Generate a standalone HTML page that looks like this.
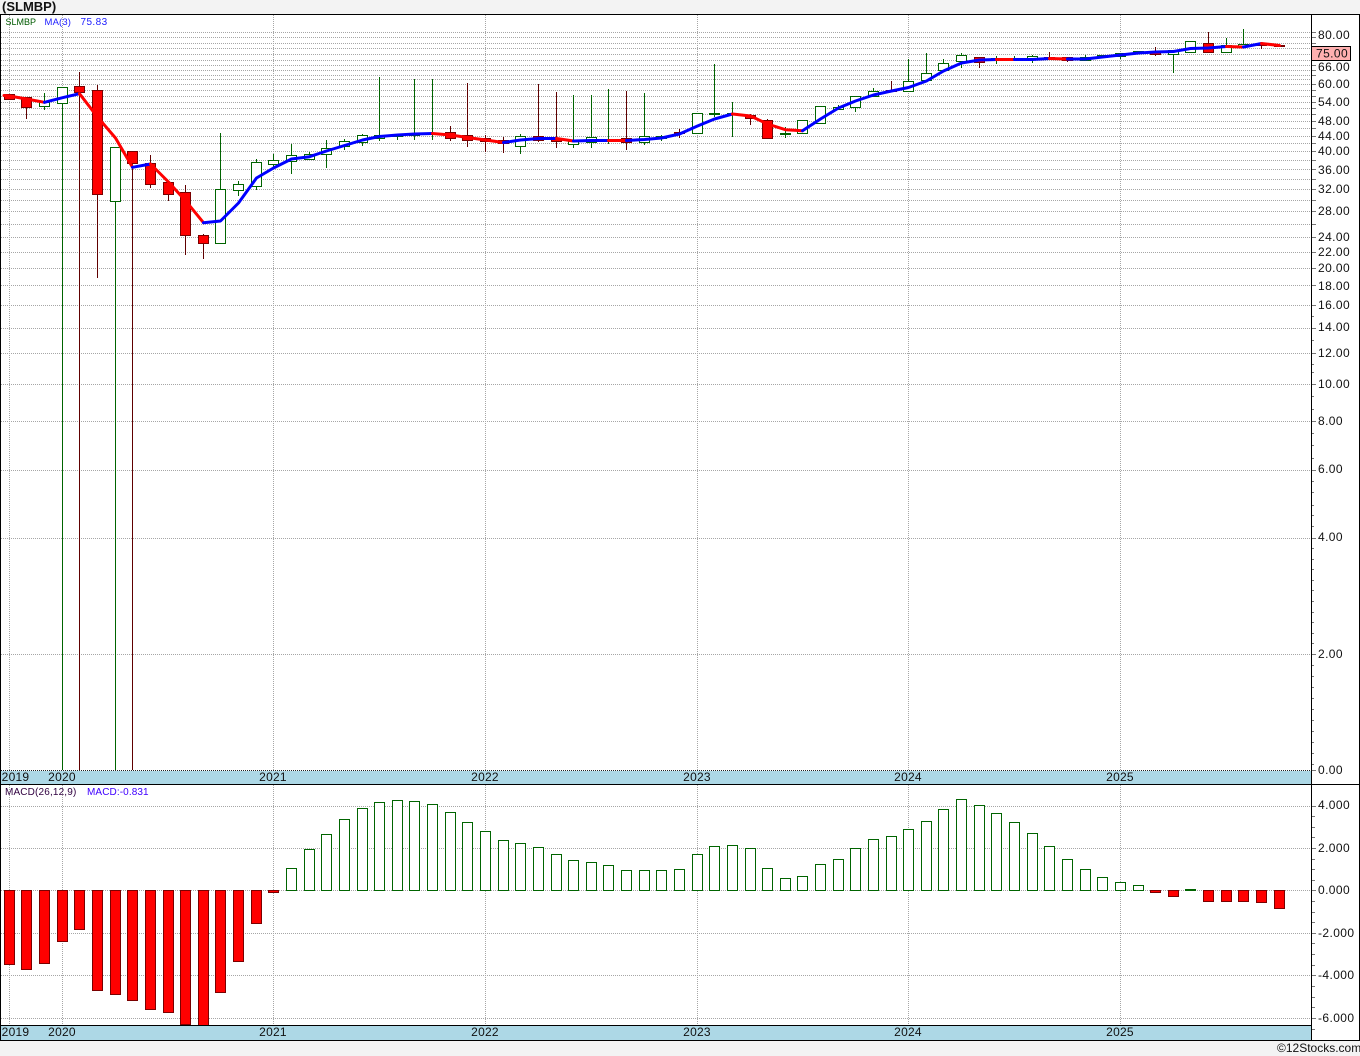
<!DOCTYPE html>
<html><head><meta charset="utf-8"><title>SLMBP</title>
<style>
html,body{margin:0;padding:0;background:#f3f3f3;width:1360px;height:1056px;overflow:hidden}
svg{display:block;font-family:"Liberation Sans",sans-serif}
.c{shape-rendering:crispEdges}
.ax{font-size:12px;letter-spacing:.4px;fill:#111}
.yr{font-size:12px;letter-spacing:.25px;fill:#111;text-anchor:middle}
.s{font-size:10px}
</style></head><body>
<svg width="1360" height="1056" viewBox="0 0 1360 1056" xmlns="http://www.w3.org/2000/svg">
<rect width="1360" height="1056" fill="#f3f3f3"/>
<text x="2" y="11" font-size="13" font-weight="bold" fill="#111">(SLMBP)</text>
<rect x="0" y="14" width="1360" height="1027" fill="#fff"/>

<g class="c">
<!-- grid horizontal main -->
<path fill="none" stroke="#a6a6a6" stroke-dasharray="1 1" d="M1 32.5H1311M1 37.5H1311M1 43.5H1311M1 48.5H1311M1 54.5H1311M1 60.5H1311M1 65.5H1311M1 70.5H1311M1 75.5H1311M1 79.5H1311M1 84.5H1311M1 90.5H1311M1 96.5H1311M1 102.5H1311M1 108.5H1311M1 114.5H1311M1 121.5H1311M1 128.5H1311M1 136.5H1311M1 143.5H1311M1 151.5H1311M1 160.5H1311M1 169.5H1311M1 179.5H1311M1 189.5H1311M1 200.5H1311M1 211.5H1311M1 224.5H1311M1 237.5H1311M1 252.5H1311M1 268.5H1311M1 285.5H1311M1 305.5H1311M1 328.5H1311M1 353.5H1311M1 384.5H1311M1 421.5H1311M1 470.5H1311M1 538.5H1311M1 654.5H1311"/>
<!-- grid vertical main -->
<path fill="none" stroke="#a6a6a6" stroke-dasharray="1 1" d="M9.5 15V770M62.5 15V770M273.5 15V770M485.5 15V770M697.5 15V770M908.5 15V770M1120.5 15V770"/>
<!-- macd grid -->
<path fill="none" stroke="#a6a6a6" stroke-dasharray="1 1" d="M1 806.5H1311M1 848.5H1311M1 890.5H1311M1 933.5H1311M1 975.5H1311M1 1018.5H1311M9.5 785V1025M62.5 785V1025M273.5 785V1025M485.5 785V1025M697.5 785V1025M908.5 785V1025M1120.5 785V1025"/>

<!-- wicks -->
<path fill="none" stroke="#006400" d="M44.5 93V110M62.5 87V770M115.5 147V770M220.5 133V243M238.5 181V196M256.5 159V190M273.5 154V168M291.5 144V174M309.5 152V159M326.5 140V168M344.5 139V150M362.5 134V146M379.5 77V141M397.5 134V140M414.5 79V140M432.5 79V140M520.5 134V154M573.5 95V148M591.5 95V148M608.5 89V144M644.5 93V145M661.5 135V141M714.5 64V117M732.5 102V137M785.5 127V138M838.5 105V109M855.5 96V112M873.5 88V97M908.5 59V92M926.5 53V81M943.5 59V71M961.5 53V68M996.5 56V64M1014.5 56V61M1032.5 55V63M1085.5 55V61M1120.5 53V59M1173.5 50V73M1226.5 38V52M1243.5 29V46"/>
<path fill="none" stroke="#600000" d="M26.5 97V119M79.5 72V770M97.5 85V278M132.5 152V770M150.5 155V188M168.5 181V201M185.5 185V255M203.5 234V259M450.5 126V141M467.5 83V147M485.5 135V152M503.5 137V153M538.5 84V142M556.5 92V148M626.5 91V150M679.5 129V138M750.5 114V125M767.5 119V121M891.5 81V92M979.5 57V68M1049.5 52V60M1067.5 57V62M1155.5 47V56M1208.5 32V53M1261.5 43V49"/>

<!-- bodies -->
<path fill="#fff" stroke="#006400" d="M39.5 102.5h10v4h-10zM57.5 87.5h10v16h-10zM110.5 147.5h10v54h-10zM215.5 189.5h10v54h-10zM233.5 184.5h10v6h-10zM251.5 162.5h10v24h-10zM268.5 160.5h10v4h-10zM286.5 155.5h10v6h-10zM304.5 154.5h10v5h-10zM321.5 148.5h10v6h-10zM339.5 141.5h10v5h-10zM357.5 135.5h10v7h-10zM374.5 135.5h10v3h-10zM392.5 134.5h10v2h-10zM409.5 134.5h10v1h-10zM427.5 133.5h10v1h-10zM515.5 136.5h10v10h-10zM568.5 141.5h10v3h-10zM586.5 137.5h10v5h-10zM603.5 139.5h10v2h-10zM639.5 136.5h10v6h-10zM656.5 136.5h10v2h-10zM692.5 113.5h10v20h-10zM709.5 113.5h10v1h-10zM727.5 113.5h10v1h-10zM780.5 133.5h10v1h-10zM797.5 120.5h10v13h-10zM815.5 106.5h10v17h-10zM833.5 107.5h10v2h-10zM850.5 96.5h10v11h-10zM868.5 91.5h10v5h-10zM903.5 81.5h10v10h-10zM921.5 73.5h10v7h-10zM938.5 63.5h10v7h-10zM956.5 55.5h10v6h-10zM991.5 58.5h10v2h-10zM1009.5 58.5h10v2h-10zM1027.5 56.5h10v3h-10zM1080.5 57.5h10v3h-10zM1097.5 55.5h10v2h-10zM1115.5 53.5h10v3h-10zM1133.5 51.5h10v2h-10zM1168.5 50.5h10v4h-10zM1185.5 41.5h10v11h-10zM1221.5 45.5h10v7h-10zM1238.5 44.5h10v2h-10z"/>
<path fill="#f00" stroke="#7a0000" d="M4.5 94.5h10v5h-10zM21.5 97.5h10v10h-10zM74.5 86.5h10v6h-10zM92.5 90.5h10v104h-10zM127.5 151.5h10v12h-10zM145.5 163.5h10v21h-10zM163.5 182.5h10v12h-10zM180.5 192.5h10v43h-10zM198.5 235.5h10v8h-10zM445.5 132.5h10v6h-10zM462.5 135.5h10v5h-10zM480.5 138.5h10v3h-10zM498.5 140.5h10v3h-10zM533.5 136.5h10v4h-10zM551.5 138.5h10v3h-10zM621.5 138.5h10v4h-10zM674.5 132.5h10v1h-10zM745.5 115.5h10v3h-10zM762.5 120.5h10v18h-10zM886.5 90.5h10v1h-10zM974.5 57.5h10v5h-10zM1044.5 57.5h10v2h-10zM1062.5 57.5h10v3h-10zM1150.5 51.5h10v3h-10zM1203.5 43.5h10v9h-10zM1256.5 43.5h10v2h-10zM1274.5 45.5h10v1h-10z"/>

<!-- MACD bars -->
<path fill="#fff" stroke="#006400" d="M286.5 868.5h10v22h-10zM304.5 849.5h10v41h-10zM321.5 834.5h10v56h-10zM339.5 819.5h10v71h-10zM357.5 808.5h10v82h-10zM374.5 802.5h10v88h-10zM392.5 800.5h10v90h-10zM409.5 801.5h10v89h-10zM427.5 804.5h10v86h-10zM445.5 812.5h10v78h-10zM462.5 822.5h10v68h-10zM480.5 831.5h10v59h-10zM498.5 840.5h10v50h-10zM515.5 843.5h10v47h-10zM533.5 847.5h10v43h-10zM551.5 854.5h10v36h-10zM568.5 860.5h10v30h-10zM586.5 862.5h10v28h-10zM603.5 865.5h10v25h-10zM621.5 870.5h10v20h-10zM639.5 870.5h10v20h-10zM656.5 870.5h10v20h-10zM674.5 869.5h10v21h-10zM692.5 854.5h10v36h-10zM709.5 846.5h10v44h-10zM727.5 845.5h10v45h-10zM745.5 848.5h10v42h-10zM762.5 868.5h10v22h-10zM780.5 878.5h10v12h-10zM797.5 876.5h10v14h-10zM815.5 864.5h10v26h-10zM833.5 859.5h10v31h-10zM850.5 848.5h10v42h-10zM868.5 839.5h10v51h-10zM886.5 836.5h10v54h-10zM903.5 829.5h10v61h-10zM921.5 821.5h10v69h-10zM938.5 809.5h10v81h-10zM956.5 799.5h10v91h-10zM974.5 805.5h10v85h-10zM991.5 813.5h10v77h-10zM1009.5 822.5h10v68h-10zM1027.5 833.5h10v57h-10zM1044.5 846.5h10v44h-10zM1062.5 859.5h10v31h-10zM1080.5 869.5h10v21h-10zM1097.5 877.5h10v13h-10zM1115.5 882.5h10v8h-10zM1133.5 885.5h10v5h-10zM1185.5 889.5h10v1h-10z"/>
<path fill="#f00" stroke="#7a0000" d="M4.5 890.5h10v74h-10zM21.5 890.5h10v79h-10zM39.5 890.5h10v73h-10zM57.5 890.5h10v51h-10zM74.5 890.5h10v39h-10zM92.5 890.5h10v100h-10zM110.5 890.5h10v104h-10zM127.5 890.5h10v110h-10zM145.5 890.5h10v119h-10zM163.5 890.5h10v122h-10zM180.5 890.5h10v134h-10zM198.5 890.5h10v135h-10zM215.5 890.5h10v102h-10zM233.5 890.5h10v71h-10zM251.5 890.5h10v33h-10zM268.5 890.5h10v2h-10zM1150.5 890.5h10v2h-10zM1168.5 890.5h10v6h-10zM1203.5 890.5h10v11h-10zM1221.5 890.5h10v11h-10zM1238.5 890.5h10v11h-10zM1256.5 890.5h10v12h-10zM1274.5 890.5h10v18h-10z"/>
</g>

<!-- moving average -->
<g fill="none" stroke-width="3" stroke-linejoin="round" stroke-linecap="round">
<polyline stroke="#f00" points="4,95.5 9.5,96 26.5,99 44.5,102.3"/>
<polyline stroke="#00f" points="44.5,102.3 62.5,97.7 79.5,93.7"/>
<polyline stroke="#f00" points="79.5,93.7 97.5,117 115.5,138 132.5,167.3"/>
<polyline stroke="#00f" points="132.5,167.3 150.5,164"/>
<polyline stroke="#f00" points="150.5,164 168.5,182 185.5,200.7 203.5,222.7"/>
<polyline stroke="#00f" points="203.5,222.7 220.5,221 238.5,203 256.5,178 273.5,168 291.5,159 309.5,156.7 326.5,151 344.5,145.5 362.5,140 379.5,136.5 397.5,135 414.5,134 432.5,133.5"/>
<polyline stroke="#f00" points="432.5,133.5 450.5,135 467.5,137.5 485.5,140 503.5,142.5"/>
<polyline stroke="#00f" points="503.5,142.5 520.5,140 538.5,138.5 556.5,138.5"/>
<polyline stroke="#f00" points="556.5,138.5 573.5,141"/>
<polyline stroke="#00f" points="573.5,141 591.5,140.5 608.5,140.5"/>
<polyline stroke="#f00" points="608.5,140.5 626.5,140.5"/>
<polyline stroke="#00f" points="626.5,140.5 644.5,139.5 661.5,138 679.5,134 697.5,126 714.5,119 732.5,114"/>
<polyline stroke="#f00" points="732.5,114 750.5,116 767.5,124 785.5,129.7 802.5,130.7"/>
<polyline stroke="#00f" points="802.5,130.7 820.5,119 838.5,108 855.5,101 873.5,95 891.5,91 908.5,87.5 926.5,81 943.5,71 961.5,63 979.5,60 996.5,59.5"/>
<polyline stroke="#f00" points="996.5,59.5 1014.5,59.5"/>
<polyline stroke="#00f" points="1014.5,59.5 1032.5,59.5 1049.5,58.5"/>
<polyline stroke="#f00" points="1049.5,58.5 1067.5,59"/>
<polyline stroke="#00f" points="1067.5,59 1085.5,59 1102.5,57 1120.5,55 1138.5,53 1155.5,52 1173.5,51.5 1190.5,48.5 1208.5,48 1226.5,46.5"/>
<polyline stroke="#f00" points="1226.5,46.5 1243.5,47"/>
<polyline stroke="#00f" points="1243.5,47 1261.5,43.5"/>
<polyline stroke="#f00" points="1261.5,43.5 1279.5,45.5"/>
</g>

<g class="c">
<!-- bands -->
<rect x="1" y="771" width="1310" height="13" fill="#add8e6"/>
<rect x="1" y="1026" width="1310" height="14" fill="#add8e6"/>
<path stroke="#222" fill="none" stroke-dasharray="1 1" d="M1 770.5H1311"/>
<!-- ticks -->
<path fill="none" stroke="#777" d="M1311 32.5h5M1311 37.5h5M1311 43.5h5M1311 65.5h5M1311 70.5h5M1311 75.5h5M1311 84.5h5M1311 90.5h5M1311 96.5h5M1311 102.5h5M1311 108.5h5M1311 114.5h5M1311 121.5h5M1311 128.5h5M1311 136.5h5M1311 143.5h5M1311 151.5h5M1311 160.5h5M1311 169.5h5M1311 179.5h5M1311 189.5h5M1311 200.5h5M1311 211.5h5M1311 224.5h5M1311 237.5h5M1311 252.5h5M1311 268.5h5M1311 285.5h5M1311 305.5h5M1311 316.5h3M1311 328.5h5M1311 340.5h3M1311 353.5h5M1311 364.5h3M1311 372.5h3M1311 384.5h5M1311 396.5h3M1311 409.5h3M1311 421.5h5M1311 433.5h3M1311 445.5h3M1311 458.5h3M1311 470.5h5M1311 481.5h3M1311 492.5h3M1311 505.5h3M1311 515.5h3M1311 526.5h3M1311 538.5h5M1311 548.5h3M1311 559.5h3M1311 569.5h3M1311 580.5h3M1311 590.5h3M1311 601.5h3M1311 612.5h3M1311 622.5h3M1311 633.5h3M1311 643.5h3M1311 654.5h5M1311 665.5h3M1311 676.5h3M1311 687.5h3M1311 698.5h3M1311 709.5h3M1311 720.5h3M1311 731.5h3M1311 742.5h3M1311 753.5h3M1311 764.5h3M1311 770.5h5"/>
<path fill="none" stroke="#777" d="M1311 806.5h5M1311 816.5h4M1311 827.5h4M1311 837.5h4M1311 848.5h5M1311 859.5h4M1311 869.5h4M1311 880.5h4M1311 890.5h5M1311 901.5h4M1311 912.5h4M1311 922.5h4M1311 933.5h5M1311 943.5h4M1311 954.5h4M1311 965.5h4M1311 975.5h5M1311 986.5h4M1311 997.5h4M1311 1007.5h4M1311 1018.5h5M1311 1029.5h4"/>
<!-- frame -->
<path fill="none" stroke="#000" d="M0 14.5H1360M0.5 14V1041M1311.5 14V1041M1359.5 14V1041M0 784.5H1360M0 1025.5H1311M0 1040.5H1360"/>
<rect x="1311.5" y="46.5" width="39" height="14" fill="#ffb0b0" stroke="#000"/>
</g>

<!-- legends -->
<text x="5.5" y="25" fill="#005a00" style="font-size:9px">SLMBP</text>
<text x="44.5" y="25" fill="#2020ff" style="font-size:9.5px;letter-spacing:.15px">MA(3)</text>
<text x="80.5" y="25" fill="#2020ff" style="font-size:10px;letter-spacing:.4px">75.83</text>
<text x="5" y="795" fill="#300040" style="font-size:10px;letter-spacing:.15px">MACD(26,12,9)</text>
<text x="87" y="795" fill="#4000ff" style="font-size:10px;letter-spacing:.1px">MACD:-0.831</text>

<!-- year labels -->
<text class="yr" x="15.5" y="781">2019</text><text class="yr" x="62" y="781">2020</text><text class="yr" x="273" y="781">2021</text><text class="yr" x="485" y="781">2022</text><text class="yr" x="697" y="781">2023</text><text class="yr" x="908" y="781">2024</text><text class="yr" x="1120" y="781">2025</text>
<text class="yr" x="15.5" y="1036">2019</text><text class="yr" x="62" y="1036">2020</text><text class="yr" x="273" y="1036">2021</text><text class="yr" x="485" y="1036">2022</text><text class="yr" x="697" y="1036">2023</text><text class="yr" x="908" y="1036">2024</text><text class="yr" x="1120" y="1036">2025</text>

<!-- price axis -->
<g class="ax">
<text x="1318" y="39">80.00</text><text x="1318" y="71">66.00</text><text x="1318" y="88">60.00</text><text x="1318" y="106">54.00</text><text x="1318" y="125">48.00</text><text x="1318" y="140">44.00</text><text x="1318" y="155">40.00</text><text x="1318" y="174">36.00</text><text x="1318" y="193">32.00</text><text x="1318" y="215">28.00</text><text x="1318" y="241">24.00</text><text x="1318" y="256">22.00</text><text x="1318" y="272">20.00</text><text x="1318" y="290">18.00</text><text x="1318" y="309">16.00</text><text x="1318" y="331">14.00</text><text x="1318" y="357">12.00</text><text x="1318" y="388">10.00</text><text x="1318" y="425">8.00</text><text x="1318" y="473">6.00</text><text x="1318" y="541">4.00</text><text x="1318" y="658">2.00</text><text x="1318" y="774">0.00</text>
<text x="1316" y="57.5">75.00</text>
<text x="1318" y="809">4.000</text><text x="1318" y="852">2.000</text><text x="1318" y="894">0.000</text><text x="1318" y="937">-2.000</text><text x="1318" y="979">-4.000</text><text x="1318" y="1022">-6.000</text>
</g>
<text x="1277" y="1052" font-size="12" fill="#111">©12Stocks.com</text>
</svg>
</body></html>
